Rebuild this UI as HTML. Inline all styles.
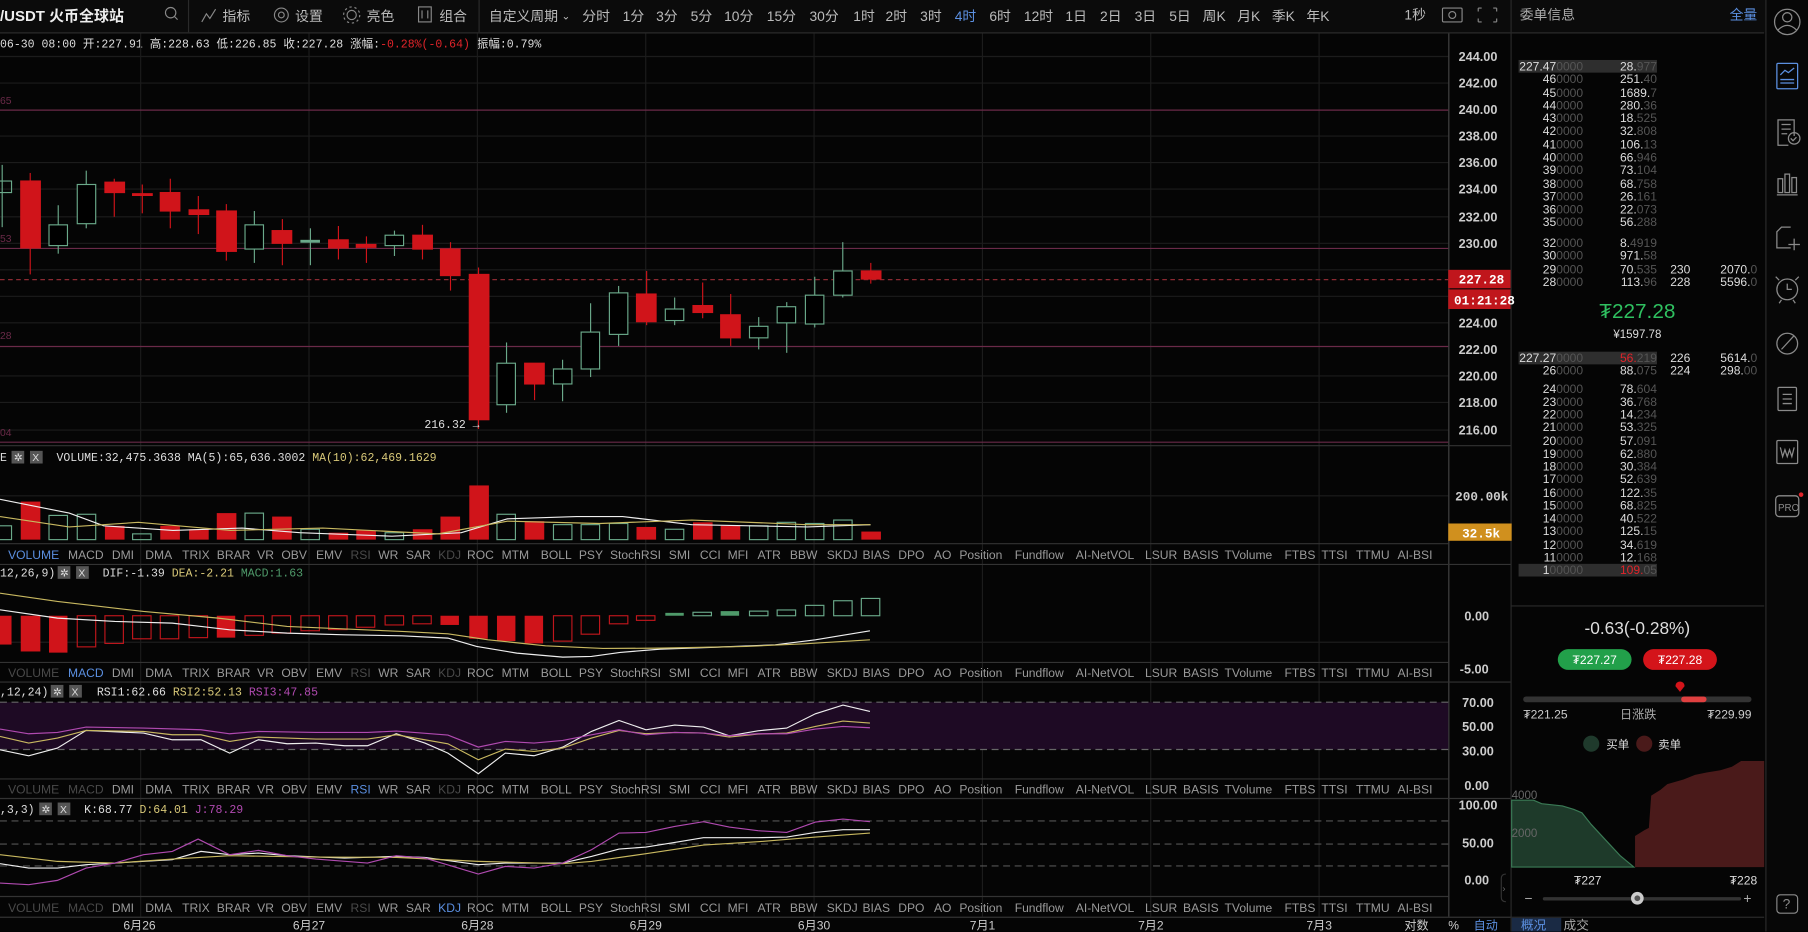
<!DOCTYPE html>
<html><head><meta charset="utf-8"><style>
html,body{margin:0;padding:0;background:#000;width:1808px;height:932px;overflow:hidden}
#w{position:absolute;left:0;top:0;width:1568px;height:808px;transform:scale(1.15306);transform-origin:0 0;background:#050505;overflow:hidden}
svg{position:absolute;left:0;top:0;overflow:hidden}
text{font-family:"Liberation Sans","Noto Sans CJK SC",sans-serif}
.m{font-family:"Liberation Mono","DejaVu Sans Mono",monospace}
.t{fill:#9a9a9a;font-size:10.5px}
.d{fill:#4a4a4a}
.b{fill:#5b8fe0}
</style></head><body><div id="w">
<svg width="1568" height="808" viewBox="0 0 1568 808">
<!-- top bar -->
<rect x="0" y="0" width="1568" height="28" fill="#0b0b0b"/>
<line x1="0" y1="28.5" x2="1530" y2="28.5" stroke="#2a2a2a"/>
<text x="0" y="18" fill="#eee" font-size="13" font-weight="bold">/USDT 火币全球站</text>
<circle cx="148" cy="11" r="4.5" fill="none" stroke="#888"/><line x1="151" y1="14" x2="154" y2="17" stroke="#888"/>
<line x1="163.5" y1="0" x2="163.5" y2="28" stroke="#2a2a2a"/>
<path d="M175 19 L179 12 L182 16 L187 8" fill="none" stroke="#888"/>
<text x="193" y="18" fill="#bbb" font-size="12">指标</text>
<circle cx="244" cy="13" r="6" fill="none" stroke="#888"/><circle cx="244" cy="13" r="2.5" fill="none" stroke="#888"/>
<text x="256" y="18" fill="#bbb" font-size="12">设置</text>
<circle cx="305" cy="13" r="4" fill="none" stroke="#888"/><circle cx="305" cy="13" r="7" fill="none" stroke="#888" stroke-dasharray="2 2.4"/>
<text x="318" y="18" fill="#bbb" font-size="12">亮色</text>
<rect x="363" y="6" width="11" height="13" fill="none" stroke="#888"/><line x1="366" y1="9" x2="366" y2="16" stroke="#888"/><line x1="371" y1="9" x2="371" y2="16" stroke="#888"/>
<text x="381" y="18" fill="#bbb" font-size="12">组合</text>
<line x1="415.5" y1="0" x2="415.5" y2="28" stroke="#2a2a2a"/>
<g fill="#bbb" font-size="12">
<text x="424" y="18">自定义周期</text><text x="487" y="17" font-size="9">⌄</text>
<text x="505" y="18">分时</text><text x="540" y="18">1分</text><text x="569" y="18">3分</text><text x="599" y="18">5分</text><text x="628" y="18">10分</text><text x="665" y="18">15分</text><text x="702" y="18">30分</text><text x="740" y="18">1时</text><text x="768" y="18">2时</text><text x="798" y="18">3时</text><text x="828" y="18" fill="#5b8fe0">4时</text><text x="858" y="18">6时</text><text x="888" y="18">12时</text><text x="924" y="18">1日</text><text x="954" y="18">2日</text><text x="984" y="18">3日</text><text x="1014" y="18">5日</text><text x="1043" y="18">周K</text><text x="1073" y="18">月K</text><text x="1103" y="18">季K</text><text x="1133" y="18">年K</text>
<text x="1218" y="17">1秒</text>
</g>
<rect x="1251" y="7" width="17" height="12" rx="1" fill="none" stroke="#888"/><circle cx="1259.5" cy="13" r="3" fill="none" stroke="#888"/>
<path d="M1282 7h3M1282 7v3M1298 7h-3M1298 7v3M1282 19h3M1282 19v-3M1298 19h-3M1298 19v-3" stroke="#888" fill="none"/>
<line x1="1310.5" y1="0" x2="1310.5" y2="808" stroke="#2a2a2a"/>
<text x="1318" y="17" fill="#aaa" font-size="12">委单信息</text>
<text x="1500" y="17" fill="#5b8fe0" font-size="12">全量</text>
<!-- right icon bar -->
<rect x="1531" y="0" width="37" height="808" fill="#070707"/>
<line x1="1531.5" y1="0" x2="1531.5" y2="808" stroke="#2a2a2a"/>
<g fill="none" stroke="#8a8a8a" stroke-width="1.1">
<circle cx="1550" cy="19" r="11"/><circle cx="1550" cy="15" r="4"/><path d="M1542 26 Q1550 18 1558 26"/>
<rect x="1541" y="55" width="18" height="22" rx="1" stroke="#5b8fe0"/><path d="M1544 65l4-4 3 2 5-4M1544 69h12M1544 72h12" stroke="#5b8fe0"/>
<path d="M1556 118v-14h-14v22h9"/><path d="M1545 108h8M1545 112h8M1545 116h5"/><circle cx="1556" cy="120" r="5"/><path d="M1553 120l2 2 3-3"/>
<rect x="1542" y="155" width="4" height="12"/><rect x="1548" y="151" width="4" height="16"/><rect x="1554" y="154" width="4" height="13"/><line x1="1541" y1="169" x2="1559" y2="169"/>
<path d="M1553 197h-8l-4 4v14h12M1556 207v10M1551 212h10"/>
<circle cx="1550" cy="251" r="9"/><path d="M1550 246v5h4M1543 243l-3-3M1557 243l3-3M1545 260l-2 3M1555 260l2 3"/>
<circle cx="1550" cy="298" r="9"/><path d="M1545 303 L1556 291"/>
<rect x="1542" y="336" width="16" height="20" rx="1"/><path d="M1546 342h8M1546 346h8M1546 350h8"/>
<rect x="1541" y="382" width="18" height="20" rx="1"/><path d="M1544 388l2 8 2-6 2 6 2-6 2 6 2-8"/>
<rect x="1540" y="430" width="20" height="18" rx="3"/>
</g>
<text x="1542" y="443" fill="#8a8a8a" font-size="8.5">PRO</text>
<circle cx="1562" cy="429" r="2" fill="#e0242a"/>
<text x="1546" y="788" fill="#8a8a8a" font-size="12">?</text>
<rect x="1541" y="776" width="18" height="16" rx="3" fill="none" stroke="#8a8a8a"/>

<!-- info line -->
<text x="0" y="41" class="m" fill="#ddd" font-size="10">06-30 08:00  开:227.91  高:228.63  低:226.85  收:227.28  涨幅:<tspan fill="#e0242a">-0.28%(-0.64)</tspan>  振幅:0.79%</text>

<!-- grid -->
<g stroke="#1c1c1c">
<line x1="0" y1="49" x2="1256" y2="49"/><line x1="0" y1="72" x2="1256" y2="72"/><line x1="0" y1="118" x2="1256" y2="118"/><line x1="0" y1="141" x2="1256" y2="141"/><line x1="0" y1="164" x2="1256" y2="164"/><line x1="0" y1="188" x2="1256" y2="188"/><line x1="0" y1="211" x2="1256" y2="211"/><line x1="0" y1="234" x2="1256" y2="234"/><line x1="0" y1="257" x2="1256" y2="257"/><line x1="0" y1="280" x2="1256" y2="280"/><line x1="0" y1="326" x2="1256" y2="326"/><line x1="0" y1="349" x2="1256" y2="349"/><line x1="0" y1="373" x2="1256" y2="373"/>
<line x1="122" y1="29" x2="122" y2="795"/><line x1="268" y1="29" x2="268" y2="795"/><line x1="414" y1="29" x2="414" y2="795"/><line x1="560" y1="29" x2="560" y2="795"/><line x1="706" y1="29" x2="706" y2="795"/><line x1="852" y1="29" x2="852" y2="795"/><line x1="998" y1="29" x2="998" y2="795"/><line x1="1144" y1="29" x2="1144" y2="795"/>
<line x1="0" y1="430" x2="1256" y2="430"/><line x1="0" y1="557" x2="1256" y2="557"/>
</g>
<g stroke="#6a2a48" stroke-width="1">
<line x1="0" y1="95.5" x2="1256" y2="95.5"/><line x1="0" y1="215.5" x2="1256" y2="215.5"/><line x1="0" y1="300.5" x2="1256" y2="300.5"/><line x1="0" y1="383.5" x2="1256" y2="383.5"/>
</g>
<line x1="0" y1="242.5" x2="1256" y2="242.5" stroke="#8a2a32" stroke-dasharray="4 3"/>
<g fill="#6a2a48" font-size="9"><text x="0" y="90">65</text><text x="0" y="210">53</text><text x="0" y="294">28</text><text x="0" y="378">04</text></g>

<!-- candles -->
<g stroke="#d0141a" fill="#d0141a">
<line x1="26.2" y1="150" x2="26.2" y2="238"/><rect x="18" y="157" width="17" height="58"/>
<line x1="99.1" y1="155" x2="99.1" y2="188"/><rect x="91" y="158" width="17" height="9"/>
<line x1="123.4" y1="160" x2="123.4" y2="185"/><rect x="115" y="168" width="17" height="1.5"/>
<line x1="147.7" y1="155" x2="147.7" y2="198"/><rect x="139" y="167" width="17" height="16"/>
<line x1="172" y1="170" x2="172" y2="203"/><rect x="164" y="182" width="17" height="4"/>
<line x1="196.3" y1="177" x2="196.3" y2="226"/><rect x="188" y="183" width="17" height="35"/>
<line x1="244.9" y1="190" x2="244.9" y2="230"/><rect x="236" y="200" width="17" height="11"/>
<line x1="293.5" y1="196" x2="293.5" y2="225"/><rect x="285" y="208" width="17" height="7"/>
<line x1="317.8" y1="205" x2="317.8" y2="228"/><rect x="309" y="212" width="17" height="2.5"/>
<line x1="366.4" y1="195" x2="366.4" y2="225"/><rect x="358" y="204" width="17" height="12"/>
<line x1="390.7" y1="210" x2="390.7" y2="252"/><rect x="382" y="216" width="17" height="23"/>
<line x1="415" y1="232" x2="415" y2="372"/><rect x="407" y="238" width="17" height="126"/>
<line x1="463.6" y1="315" x2="463.6" y2="347"/><rect x="455" y="315" width="17" height="18"/>
<line x1="560.8" y1="235" x2="560.8" y2="282"/><rect x="552" y="255" width="17" height="24"/>
<line x1="609.4" y1="245" x2="609.4" y2="276"/><rect x="601" y="265" width="17" height="6"/>
<line x1="633.7" y1="255" x2="633.7" y2="300"/><rect x="625" y="273" width="17" height="20"/>
<line x1="755.2" y1="228" x2="755.2" y2="246"/><rect x="747" y="235" width="17" height="7"/>
</g>
<g stroke="#6aa98a" fill="none">
<line x1="1.9" y1="143" x2="1.9" y2="197"/><rect x="-6" y="157" width="16" height="10"/>
<line x1="50.5" y1="178" x2="50.5" y2="220"/><rect x="42.5" y="195" width="16" height="18" fill="#000"/>
<line x1="74.8" y1="148" x2="74.8" y2="198"/><rect x="67" y="160" width="16" height="34" fill="#000"/>
<line x1="220.6" y1="183" x2="220.6" y2="228"/><rect x="212.5" y="195" width="16" height="21" fill="#000"/>
<line x1="269.2" y1="198" x2="269.2" y2="230"/><rect x="261" y="208.5" width="16" height="1.5" fill="#6aa98a"/>
<line x1="342.1" y1="200" x2="342.1" y2="222"/><rect x="334" y="204" width="16" height="9" fill="#000"/>
<line x1="439.3" y1="297" x2="439.3" y2="358"/><rect x="431" y="315" width="16" height="36" fill="#000"/>
<line x1="487.9" y1="312" x2="487.9" y2="348"/><rect x="480" y="320" width="16" height="13" fill="#000"/>
<line x1="512.2" y1="263" x2="512.2" y2="327"/><rect x="504" y="288" width="16" height="32" fill="#000"/>
<line x1="536.5" y1="248" x2="536.5" y2="300"/><rect x="528.5" y="254" width="16" height="36" fill="#000"/>
<line x1="585.1" y1="258" x2="585.1" y2="282"/><rect x="577" y="268" width="16" height="10" fill="#000"/>
<line x1="658" y1="275" x2="658" y2="303"/><rect x="650" y="283" width="16" height="10" fill="#000"/>
<line x1="682.3" y1="262" x2="682.3" y2="306"/><rect x="674" y="266" width="16" height="14" fill="#000"/>
<line x1="706.6" y1="240" x2="706.6" y2="284"/><rect x="698.5" y="256" width="16" height="25" fill="#000"/>
<line x1="730.9" y1="210" x2="730.9" y2="258"/><rect x="723" y="235" width="16" height="21" fill="#000"/>
</g>
<text x="368" y="371" class="m" fill="#ddd" font-size="10">216.32 →</text>

<!-- price axis -->
<line x1="1256.5" y1="29" x2="1256.5" y2="795" stroke="#444"/>
<g class="m" fill="#ccc" font-size="11" font-weight="bold">
<text x="1265" y="53">244.00</text><text x="1265" y="76">242.00</text><text x="1265" y="99">240.00</text><text x="1265" y="122">238.00</text><text x="1265" y="145">236.00</text><text x="1265" y="168">234.00</text><text x="1265" y="192">232.00</text><text x="1265" y="215">230.00</text><text x="1265" y="307">222.00</text><text x="1265" y="330">220.00</text><text x="1265" y="353">218.00</text><text x="1265" y="377">216.00</text><text x="1265" y="284">224.00</text>
</g>
<rect x="1256" y="234" width="54" height="16" fill="#c0161c"/><text x="1265" y="246" class="m" fill="#fff" font-size="11" font-weight="bold">227.28</text>
<rect x="1256" y="251" width="54" height="17" fill="#c0161c"/><text x="1261" y="264" class="m" fill="#fff" font-size="11" font-weight="bold">01:21:28</text>
<line x1="0" y1="386.5" x2="1310" y2="386.5" stroke="#333"/>

<!-- volume panel -->
<text x="0" y="400" class="m" fill="#ddd" font-size="10">E</text>
<rect x="10" y="391" width="11" height="11" fill="#555"/><rect x="26" y="391" width="11" height="11" fill="#555"/>
<text x="12" y="400" fill="#ddd" font-size="9">✲</text><text x="28" y="400" fill="#ddd" font-size="9">X</text>
<text x="49" y="400" class="m" fill="#ddd" font-size="10">VOLUME:32,475.3638  MA(5):65,636.3002  <tspan fill="#d8c878">MA(10):62,469.1629</tspan></text>
<g fill="#d0141a">
<rect x="18" y="435" width="17" height="33"/><rect x="91" y="456" width="17" height="12"/><rect x="139" y="456" width="17" height="12"/><rect x="164" y="459" width="17" height="9"/><rect x="188" y="445" width="17" height="23"/><rect x="236" y="448" width="17" height="20"/><rect x="285" y="462" width="17" height="6"/><rect x="309" y="460" width="17" height="8"/><rect x="358" y="459" width="17" height="9"/><rect x="382" y="448" width="17" height="20"/><rect x="407" y="421" width="17" height="47"/><rect x="455" y="452" width="17" height="16"/><rect x="552" y="457" width="17" height="11"/><rect x="601" y="453" width="17" height="15"/><rect x="625" y="456" width="17" height="12"/><rect x="747" y="461" width="17" height="7"/>
</g>
<g fill="none" stroke="#6aa98a">
<rect x="-6" y="456" width="16" height="12"/><rect x="42.5" y="447" width="16" height="21"/><rect x="67" y="446" width="16" height="22"/><rect x="115" y="463" width="16" height="5"/><rect x="212.5" y="445" width="16" height="23"/><rect x="261" y="459" width="16" height="9"/><rect x="334" y="462" width="16" height="6"/><rect x="431" y="446" width="16" height="22"/><rect x="480" y="455" width="16" height="13"/><rect x="504" y="455" width="16" height="13"/><rect x="528.5" y="454" width="16" height="14"/><rect x="577" y="459" width="16" height="9"/><rect x="650" y="456" width="16" height="12"/><rect x="674" y="453" width="16" height="15"/><rect x="698.5" y="454" width="16" height="14"/><rect x="723" y="451" width="16" height="17"/>
</g>
<polyline fill="none" stroke="#eee" points="0,433 60,445 90,456 150,460 210,458 260,462 340,465 400,462 440,450 500,448 540,448 600,455 700,457 755,455"/>
<polyline fill="none" stroke="#c8b860" points="0,448 60,457 120,453 200,460 280,458 380,463 440,452 520,454 600,451 700,455 755,455"/>
<text x="1262" y="434" class="m" fill="#ccc" font-size="11" font-weight="bold">200.00k</text>
<rect x="1256" y="454" width="55" height="15" fill="#d0901e"/><text x="1268" y="466" class="m" fill="#fff" font-size="11" font-weight="bold">32.5k</text>

<!-- tab rows -->
<g class="t">
<line x1="0" y1="471.5" x2="1256" y2="471.5" stroke="#333"/><line x1="0" y1="489.5" x2="1310" y2="489.5" stroke="#333"/>
<text x="7" y="485" class="b">VOLUME</text><text x="59" y="485">MACD</text><text x="97" y="485">DMI</text><text x="126" y="485">DMA</text><text x="158" y="485">TRIX</text><text x="188" y="485">BRAR</text><text x="223" y="485">VR</text><text x="244" y="485">OBV</text><text x="274" y="485">EMV</text><text x="304" y="485" class="d">RSI</text><text x="328" y="485">WR</text><text x="352" y="485">SAR</text><text x="380" y="485" class="d">KDJ</text><text x="405" y="485">ROC</text><text x="435" y="485">MTM</text><text x="469" y="485">BOLL</text><text x="502" y="485">PSY</text><text x="529" y="485">StochRSI</text><text x="580" y="485">SMI</text><text x="607" y="485">CCI</text><text x="631" y="485">MFI</text><text x="657" y="485">ATR</text><text x="685" y="485">BBW</text><text x="717" y="485">SKDJ</text><text x="748" y="485">BIAS</text><text x="779" y="485">DPO</text><text x="810" y="485">AO</text><text x="832" y="485">Position</text><text x="880" y="485">Fundflow</text><text x="933" y="485">AI-NetVOL</text><text x="993" y="485">LSUR</text><text x="1026" y="485">BASIS</text><text x="1062" y="485">TVolume</text><text x="1114" y="485">FTBS</text><text x="1146" y="485">TTSI</text><text x="1176" y="485">TTMU</text><text x="1212" y="485">AI-BSI</text>
</g>
<g class="t">
<line x1="0" y1="574.5" x2="1256" y2="574.5" stroke="#333"/><line x1="0" y1="591.5" x2="1310" y2="591.5" stroke="#333"/>
<text x="7" y="587" class="d">VOLUME</text><text x="59" y="587" class="b">MACD</text><text x="97" y="587">DMI</text><text x="126" y="587">DMA</text><text x="158" y="587">TRIX</text><text x="188" y="587">BRAR</text><text x="223" y="587">VR</text><text x="244" y="587">OBV</text><text x="274" y="587">EMV</text><text x="304" y="587" class="d">RSI</text><text x="328" y="587">WR</text><text x="352" y="587">SAR</text><text x="380" y="587" class="d">KDJ</text><text x="405" y="587">ROC</text><text x="435" y="587">MTM</text><text x="469" y="587">BOLL</text><text x="502" y="587">PSY</text><text x="529" y="587">StochRSI</text><text x="580" y="587">SMI</text><text x="607" y="587">CCI</text><text x="631" y="587">MFI</text><text x="657" y="587">ATR</text><text x="685" y="587">BBW</text><text x="717" y="587">SKDJ</text><text x="748" y="587">BIAS</text><text x="779" y="587">DPO</text><text x="810" y="587">AO</text><text x="832" y="587">Position</text><text x="880" y="587">Fundflow</text><text x="933" y="587">AI-NetVOL</text><text x="993" y="587">LSUR</text><text x="1026" y="587">BASIS</text><text x="1062" y="587">TVolume</text><text x="1114" y="587">FTBS</text><text x="1146" y="587">TTSI</text><text x="1176" y="587">TTMU</text><text x="1212" y="587">AI-BSI</text>
</g>
<g class="t">
<line x1="0" y1="675.5" x2="1256" y2="675.5" stroke="#333"/><line x1="0" y1="692.5" x2="1310" y2="692.5" stroke="#333"/>
<text x="7" y="688" class="d">VOLUME</text><text x="59" y="688" class="d">MACD</text><text x="97" y="688">DMI</text><text x="126" y="688">DMA</text><text x="158" y="688">TRIX</text><text x="188" y="688">BRAR</text><text x="223" y="688">VR</text><text x="244" y="688">OBV</text><text x="274" y="688">EMV</text><text x="304" y="688" class="b">RSI</text><text x="328" y="688">WR</text><text x="352" y="688">SAR</text><text x="380" y="688" class="d">KDJ</text><text x="405" y="688">ROC</text><text x="435" y="688">MTM</text><text x="469" y="688">BOLL</text><text x="502" y="688">PSY</text><text x="529" y="688">StochRSI</text><text x="580" y="688">SMI</text><text x="607" y="688">CCI</text><text x="631" y="688">MFI</text><text x="657" y="688">ATR</text><text x="685" y="688">BBW</text><text x="717" y="688">SKDJ</text><text x="748" y="688">BIAS</text><text x="779" y="688">DPO</text><text x="810" y="688">AO</text><text x="832" y="688">Position</text><text x="880" y="688">Fundflow</text><text x="933" y="688">AI-NetVOL</text><text x="993" y="688">LSUR</text><text x="1026" y="688">BASIS</text><text x="1062" y="688">TVolume</text><text x="1114" y="688">FTBS</text><text x="1146" y="688">TTSI</text><text x="1176" y="688">TTMU</text><text x="1212" y="688">AI-BSI</text>
</g>
<g class="t">
<line x1="0" y1="777.5" x2="1256" y2="777.5" stroke="#333"/><line x1="0" y1="795.5" x2="1310" y2="795.5" stroke="#333"/>
<text x="7" y="791" class="d">VOLUME</text><text x="59" y="791" class="d">MACD</text><text x="97" y="791">DMI</text><text x="126" y="791">DMA</text><text x="158" y="791">TRIX</text><text x="188" y="791">BRAR</text><text x="223" y="791">VR</text><text x="244" y="791">OBV</text><text x="274" y="791">EMV</text><text x="304" y="791" class="d">RSI</text><text x="328" y="791">WR</text><text x="352" y="791">SAR</text><text x="380" y="791" class="b">KDJ</text><text x="405" y="791">ROC</text><text x="435" y="791">MTM</text><text x="469" y="791">BOLL</text><text x="502" y="791">PSY</text><text x="529" y="791">StochRSI</text><text x="580" y="791">SMI</text><text x="607" y="791">CCI</text><text x="631" y="791">MFI</text><text x="657" y="791">ATR</text><text x="685" y="791">BBW</text><text x="717" y="791">SKDJ</text><text x="748" y="791">BIAS</text><text x="779" y="791">DPO</text><text x="810" y="791">AO</text><text x="832" y="791">Position</text><text x="880" y="791">Fundflow</text><text x="933" y="791">AI-NetVOL</text><text x="993" y="791">LSUR</text><text x="1026" y="791">BASIS</text><text x="1062" y="791">TVolume</text><text x="1114" y="791">FTBS</text><text x="1146" y="791">TTSI</text><text x="1176" y="791">TTMU</text><text x="1212" y="791">AI-BSI</text>
</g>

<!-- MACD panel -->
<text x="0" y="500" class="m" fill="#ddd" font-size="10">12,26,9)</text>
<rect x="50" y="491" width="11" height="11" fill="#555"/><rect x="66" y="491" width="11" height="11" fill="#555"/>
<text x="52" y="500" fill="#ddd" font-size="9">✲</text><text x="68" y="500" fill="#ddd" font-size="9">X</text>
<text x="89" y="500" class="m" fill="#ddd" font-size="10">DIF:-1.39  <tspan fill="#d8c878">DEA:-2.21</tspan>  <tspan fill="#4f9a6a">MACD:1.63</tspan></text>
<g fill="#d0141a"><rect x="-6" y="534" width="16" height="25"/><rect x="18" y="534" width="17" height="31"/><rect x="42.5" y="534" width="16" height="32"/><rect x="188" y="534" width="16" height="19"/><rect x="382" y="534" width="16" height="8"/><rect x="407" y="534" width="16" height="20"/><rect x="431" y="534" width="16" height="22"/><rect x="455" y="534" width="16" height="24"/></g>
<g fill="none" stroke="#c0161c"><rect x="67" y="534" width="16" height="27"/><rect x="91" y="534" width="16" height="24"/><rect x="115" y="534" width="16" height="20"/><rect x="139" y="534" width="16" height="20"/><rect x="164" y="534" width="16" height="19"/><rect x="212.5" y="534" width="16" height="17"/><rect x="236" y="534" width="16" height="15"/><rect x="261" y="534" width="16" height="13"/><rect x="285" y="534" width="16" height="12"/><rect x="309" y="534" width="16" height="10"/><rect x="334" y="534" width="16" height="8"/><rect x="358" y="534" width="16" height="7"/><rect x="480" y="534" width="16" height="22"/><rect x="504" y="534" width="16" height="16"/><rect x="528.5" y="534" width="16" height="7"/><rect x="552" y="534" width="16" height="4"/></g>
<g fill="#4f9a6a"><rect x="577" y="531.5" width="16" height="2.5"/><rect x="625" y="530" width="16" height="4"/></g>
<g fill="none" stroke="#6aa98a"><rect x="601" y="531" width="16" height="3"/><rect x="650" y="530" width="16" height="4"/><rect x="674" y="529" width="16" height="5"/><rect x="698.5" y="525" width="16" height="9"/><rect x="723" y="521" width="16" height="13"/><rect x="747" y="519" width="16" height="15"/></g>
<g transform="matrix(0.498 0 0 0.289 0 485.5)" fill="none">
<polyline vector-effect="non-scaling-stroke" stroke="#eee" points="0,150 100,175 200,185 300,190 350,200 400,210 500,220 600,225 700,228 780,235 830,260 900,280 980,292 1030,290 1080,278 1150,268 1250,262 1350,255 1420,240 1515,213"/>
<polyline vector-effect="non-scaling-stroke" stroke="#c8b860" points="0,100 100,125 250,155 380,175 500,200 700,215 780,222 850,240 950,258 1050,266 1150,265 1300,260 1400,252 1515,240"/>
</g>
<g class="m" fill="#ccc" font-size="11" font-weight="bold"><text x="1270" y="538">0.00</text><text x="1266" y="584">-5.00</text></g>

<!-- RSI panel -->
<text x="0" y="603" class="m" fill="#ddd" font-size="10">,12,24)</text>
<rect x="44" y="594" width="11" height="11" fill="#555"/><rect x="60" y="594" width="11" height="11" fill="#555"/>
<text x="46" y="603" fill="#ddd" font-size="9">✲</text><text x="62" y="603" fill="#ddd" font-size="9">X</text>
<text x="84" y="603" class="m" fill="#ddd" font-size="10">RSI1:62.66  <tspan fill="#d8c878">RSI2:52.13</tspan>  <tspan fill="#b04ab0">RSI3:47.85</tspan></text>
<rect x="0" y="609" width="1256" height="41" fill="#1e0a24"/>
<line x1="0" y1="609" x2="1256" y2="609" stroke="#666" stroke-dasharray="6 4"/><line x1="0" y1="650" x2="1256" y2="650" stroke="#666" stroke-dasharray="6 4"/>
<g transform="matrix(0.498 0 0 0.289 0 485.5)" fill="none">
<polyline vector-effect="non-scaling-stroke" stroke="#eee" points="0,570 50,588 100,565 150,512 250,520 300,540 350,540 400,580 450,540 500,552 550,550 600,558 640,558 690,522 740,550 780,580 833,642 880,580 930,588 980,562 1030,515 1078,482 1125,510 1175,496 1225,502 1270,528 1320,513 1370,505 1420,462 1468,436 1515,455"/>
<polyline vector-effect="non-scaling-stroke" stroke="#c8b860" points="0,530 50,550 100,535 150,512 250,515 300,525 350,525 400,545 450,532 550,538 640,538 690,525 780,552 833,600 880,568 930,575 980,565 1030,535 1078,512 1125,522 1175,518 1225,520 1270,532 1320,523 1370,520 1420,500 1468,484 1515,490"/>
<polyline vector-effect="non-scaling-stroke" stroke="#b04ab0" points="0,508 50,522 100,518 150,502 250,505 350,510 400,522 450,515 550,518 640,518 690,514 780,526 833,562 880,545 930,550 980,542 1030,525 1078,510 1125,525 1175,518 1225,520 1270,528 1320,522 1370,522 1420,508 1468,500 1515,504"/>
</g>
<g class="m" fill="#ccc" font-size="11" font-weight="bold"><text x="1268" y="613">70.00</text><text x="1268" y="634">50.00</text><text x="1268" y="655">30.00</text><text x="1270" y="685">0.00</text></g>

<!-- KDJ panel -->
<text x="0" y="705" class="m" fill="#ddd" font-size="10">,3,3)</text>
<rect x="34" y="696" width="11" height="11" fill="#555"/><rect x="50" y="696" width="11" height="11" fill="#555"/>
<text x="36" y="705" fill="#ddd" font-size="9">✲</text><text x="52" y="705" fill="#ddd" font-size="9">X</text>
<text x="73" y="705" class="m" fill="#ddd" font-size="10">K:68.77  <tspan fill="#d8c878">D:64.01</tspan>  <tspan fill="#b04ab0">J:78.29</tspan></text>
<g stroke="#555" stroke-dasharray="6 4"><line x1="0" y1="712" x2="1256" y2="712"/><line x1="0" y1="732" x2="1256" y2="732"/><line x1="0" y1="751" x2="1256" y2="751"/></g>
<g transform="matrix(0.498 0 0 0.289 0 485.5)" fill="none">
<polyline vector-effect="non-scaling-stroke" stroke="#eee" points="0,912 50,925 100,925 150,915 200,910 300,900 350,875 400,885 450,880 500,888 600,895 690,890 740,893 833,915 880,910 980,910 1030,890 1078,868 1125,862 1175,848 1225,834 1320,834 1370,832 1420,818 1468,810 1515,810"/>
<polyline vector-effect="non-scaling-stroke" stroke="#c8b860" points="0,885 100,905 200,910 300,898 400,888 550,892 690,893 833,905 980,912 1030,905 1125,882 1225,856 1320,846 1420,832 1515,820"/>
<polyline vector-effect="non-scaling-stroke" stroke="#b04ab0" points="0,970 50,975 100,962 150,925 200,910 250,885 300,875 345,838 400,885 450,872 500,888 550,898 640,910 690,888 740,895 833,943 880,920 930,925 980,910 1030,870 1078,820 1125,818 1175,800 1225,786 1270,802 1320,813 1370,818 1420,787 1468,778 1515,786"/>
</g>
<g class="m" fill="#ccc" font-size="11" font-weight="bold"><text x="1265" y="702">100.00</text><text x="1268" y="735">50.00</text><text x="1270" y="767">0.00</text></g>
<path d="M1306 758 q-4 0 -4 4 v16 q0 4 4 4" fill="none" stroke="#333"/><text x="1303" y="773" fill="#666" font-size="8">›</text>

<!-- time axis -->
<g fill="#ccc" font-size="10.5"><text x="107" y="806">6月26</text><text x="254" y="806">6月27</text><text x="400" y="806">6月28</text><text x="546" y="806">6月29</text><text x="692" y="806">6月30</text><text x="841" y="806">7月1</text><text x="987" y="806">7月2</text><text x="1133" y="806">7月3</text>
<text x="1218" y="806">对数</text><text x="1256" y="806">%</text><text x="1278" y="806" fill="#5b8fe0">自动</text></g>

<!-- order book asks -->
<rect x="1317" y="52" width="120" height="11" fill="#2e2e2e"/>
<g class="m" font-size="10.5" fill="#ddd" text-anchor="end">
<text x="1373" y="61">227.47<tspan fill="#555">0000</tspan></text><text x="1437" y="61">28.<tspan fill="#555">977</tspan></text>
<text x="1373" y="72">46<tspan fill="#555">0000</tspan></text><text x="1437" y="72">251.<tspan fill="#555">40</tspan></text>
<text x="1373" y="84">45<tspan fill="#555">0000</tspan></text><text x="1437" y="84">1689.<tspan fill="#555">7</tspan></text>
<text x="1373" y="95">44<tspan fill="#555">0000</tspan></text><text x="1437" y="95">280.<tspan fill="#555">36</tspan></text>
<text x="1373" y="106">43<tspan fill="#555">0000</tspan></text><text x="1437" y="106">18.<tspan fill="#555">525</tspan></text>
<text x="1373" y="117">42<tspan fill="#555">0000</tspan></text><text x="1437" y="117">32.<tspan fill="#555">808</tspan></text>
<text x="1373" y="129">41<tspan fill="#555">0000</tspan></text><text x="1437" y="129">106.<tspan fill="#555">13</tspan></text>
<text x="1373" y="140">40<tspan fill="#555">0000</tspan></text><text x="1437" y="140">66.<tspan fill="#555">946</tspan></text>
<text x="1373" y="151">39<tspan fill="#555">0000</tspan></text><text x="1437" y="151">73.<tspan fill="#555">104</tspan></text>
<text x="1373" y="163">38<tspan fill="#555">0000</tspan></text><text x="1437" y="163">68.<tspan fill="#555">758</tspan></text>
<text x="1373" y="174">37<tspan fill="#555">0000</tspan></text><text x="1437" y="174">26.<tspan fill="#555">161</tspan></text>
<text x="1373" y="185">36<tspan fill="#555">0000</tspan></text><text x="1437" y="185">22.<tspan fill="#555">073</tspan></text>
<text x="1373" y="196">35<tspan fill="#555">0000</tspan></text><text x="1437" y="196">56.<tspan fill="#555">288</tspan></text>
<text x="1373" y="214">32<tspan fill="#555">0000</tspan></text><text x="1437" y="214">8.<tspan fill="#555">4919</tspan></text>
<text x="1373" y="225">30<tspan fill="#555">0000</tspan></text><text x="1437" y="225">971.<tspan fill="#555">58</tspan></text>
<text x="1373" y="237">29<tspan fill="#555">0000</tspan></text><text x="1437" y="237">70.<tspan fill="#555">535</tspan></text>
<text x="1373" y="248">28<tspan fill="#555">0000</tspan></text><text x="1437" y="248">113.<tspan fill="#555">96</tspan></text>
<text x="1466" y="237">230</text><text x="1524" y="237">2070.<tspan fill="#555">0</tspan></text>
<text x="1466" y="248">228</text><text x="1524" y="248">5596.<tspan fill="#555">0</tspan></text>
</g>
<text x="1420" y="276" text-anchor="middle" fill="#2fc060" font-size="18">₮227.28</text>
<text x="1420" y="293" text-anchor="middle" fill="#ddd" font-size="10">¥1597.78</text>
<!-- bids -->
<rect x="1317" y="305" width="120" height="11" fill="#2e2e2e"/>
<rect x="1317" y="489" width="120" height="11" fill="#2e2e2e"/>
<g class="m" font-size="10.5" fill="#ddd" text-anchor="end">
<text x="1373" y="314">227.27<tspan fill="#555">0000</tspan></text><text x="1437" y="314" fill="#e0242a">56.<tspan fill="#555">219</tspan></text><text x="1466" y="314">226</text><text x="1524" y="314">5614.<tspan fill="#555">0</tspan></text>
<text x="1373" y="325">26<tspan fill="#555">0000</tspan></text><text x="1437" y="325">88.<tspan fill="#555">075</tspan></text><text x="1466" y="325">224</text><text x="1524" y="325">298.<tspan fill="#555">00</tspan></text>
<text x="1373" y="341">24<tspan fill="#555">0000</tspan></text><text x="1437" y="341">78.<tspan fill="#555">604</tspan></text>
<text x="1373" y="352">23<tspan fill="#555">0000</tspan></text><text x="1437" y="352">36.<tspan fill="#555">768</tspan></text>
<text x="1373" y="363">22<tspan fill="#555">0000</tspan></text><text x="1437" y="363">14.<tspan fill="#555">234</tspan></text>
<text x="1373" y="374">21<tspan fill="#555">0000</tspan></text><text x="1437" y="374">53.<tspan fill="#555">325</tspan></text>
<text x="1373" y="386">20<tspan fill="#555">0000</tspan></text><text x="1437" y="386">57.<tspan fill="#555">091</tspan></text>
<text x="1373" y="397">19<tspan fill="#555">0000</tspan></text><text x="1437" y="397">62.<tspan fill="#555">880</tspan></text>
<text x="1373" y="408">18<tspan fill="#555">0000</tspan></text><text x="1437" y="408">30.<tspan fill="#555">384</tspan></text>
<text x="1373" y="419">17<tspan fill="#555">0000</tspan></text><text x="1437" y="419">52.<tspan fill="#555">639</tspan></text>
<text x="1373" y="431">16<tspan fill="#555">0000</tspan></text><text x="1437" y="431">122.<tspan fill="#555">35</tspan></text>
<text x="1373" y="442">15<tspan fill="#555">0000</tspan></text><text x="1437" y="442">68.<tspan fill="#555">825</tspan></text>
<text x="1373" y="453">14<tspan fill="#555">0000</tspan></text><text x="1437" y="453">40.<tspan fill="#555">522</tspan></text>
<text x="1373" y="464">13<tspan fill="#555">0000</tspan></text><text x="1437" y="464">125.<tspan fill="#555">15</tspan></text>
<text x="1373" y="476">12<tspan fill="#555">0000</tspan></text><text x="1437" y="476">34.<tspan fill="#555">619</tspan></text>
<text x="1373" y="487">11<tspan fill="#555">0000</tspan></text><text x="1437" y="487">12.<tspan fill="#555">168</tspan></text>
<text x="1373" y="498">1<tspan fill="#555">00000</tspan></text><text x="1437" y="498" fill="#e0242a">109.<tspan fill="#555">05</tspan></text>
</g>
<line x1="1310" y1="525.5" x2="1530" y2="525.5" stroke="#2a2a2a"/>
<text x="1420" y="550" text-anchor="middle" fill="#ddd" font-size="15">-0.63(-0.28%)</text>
<rect x="1351" y="563" width="64" height="18" rx="9" fill="#22a04a"/><text x="1383" y="576" text-anchor="middle" fill="#fff" font-size="10.5">₮227.27</text>
<rect x="1425" y="563" width="64" height="18" rx="9" fill="#d4141a"/><text x="1457" y="576" text-anchor="middle" fill="#fff" font-size="10.5">₮227.28</text>
<rect x="1321" y="604" width="198" height="5" rx="2.5" fill="#333"/><rect x="1458" y="604" width="22" height="5" rx="2.5" fill="#e04040"/>
<path d="M1457 600 l-4 -5 a4 4 0 1 1 8 0 z" fill="#d4141a"/>
<g font-size="10.5" fill="#ccc"><text x="1321" y="623">₮221.25</text><text x="1405" y="623" fill="#aaa">日涨跌</text><text x="1519" y="623" text-anchor="end">₮229.99</text></g>
<circle cx="1380" cy="645" r="7" fill="#1f3a2c"/><text x="1393" y="649" fill="#ddd" font-size="10">买单</text>
<circle cx="1426" cy="645" r="7" fill="#4a1a1a"/><text x="1438" y="649" fill="#ddd" font-size="10">卖单</text>
<path d="M1311 694 L1330 694 L1337 697 L1355 699 L1365 702 L1372 705 L1380 715 L1392 728 L1405 742 L1417 752 L1311 752 Z" fill="#1e3a2a" stroke="#3a7a55"/>
<path d="M1418 752 L1418 725 L1426 720 L1430 718 L1432 690 L1440 685 L1446 680 L1460 676 L1470 672 L1480 670 L1492 668 L1502 665 L1510 660 L1530 660 L1530 752 Z" fill="#4a1a1a"/>
<text x="1311" y="693" fill="#666" font-size="10">4000</text><text x="1311" y="726" fill="#666" font-size="10">2000</text>
<g font-size="10.5" fill="#ddd"><text x="1377" y="767" text-anchor="middle">₮227</text><text x="1512" y="767" text-anchor="middle">₮228</text></g>
<text x="1322" y="783" fill="#aaa" font-size="12">−</text><text x="1512" y="783" fill="#aaa" font-size="12">+</text>
<rect x="1338" y="778" width="172" height="3" rx="1.5" fill="#333"/>
<circle cx="1420" cy="779" r="5.5" fill="#ccc"/><circle cx="1420" cy="779" r="2.5" fill="#555"/>
<line x1="1310" y1="795.5" x2="1530" y2="795.5" stroke="#2a2a2a"/>
<rect x="1311" y="796" width="43" height="12" fill="#1a2a44"/>
<text x="1319" y="806" fill="#5b8fe0" font-size="11">概况</text><text x="1356" y="806" fill="#aaa" font-size="11">成交</text>
</svg>
</div></body></html>
